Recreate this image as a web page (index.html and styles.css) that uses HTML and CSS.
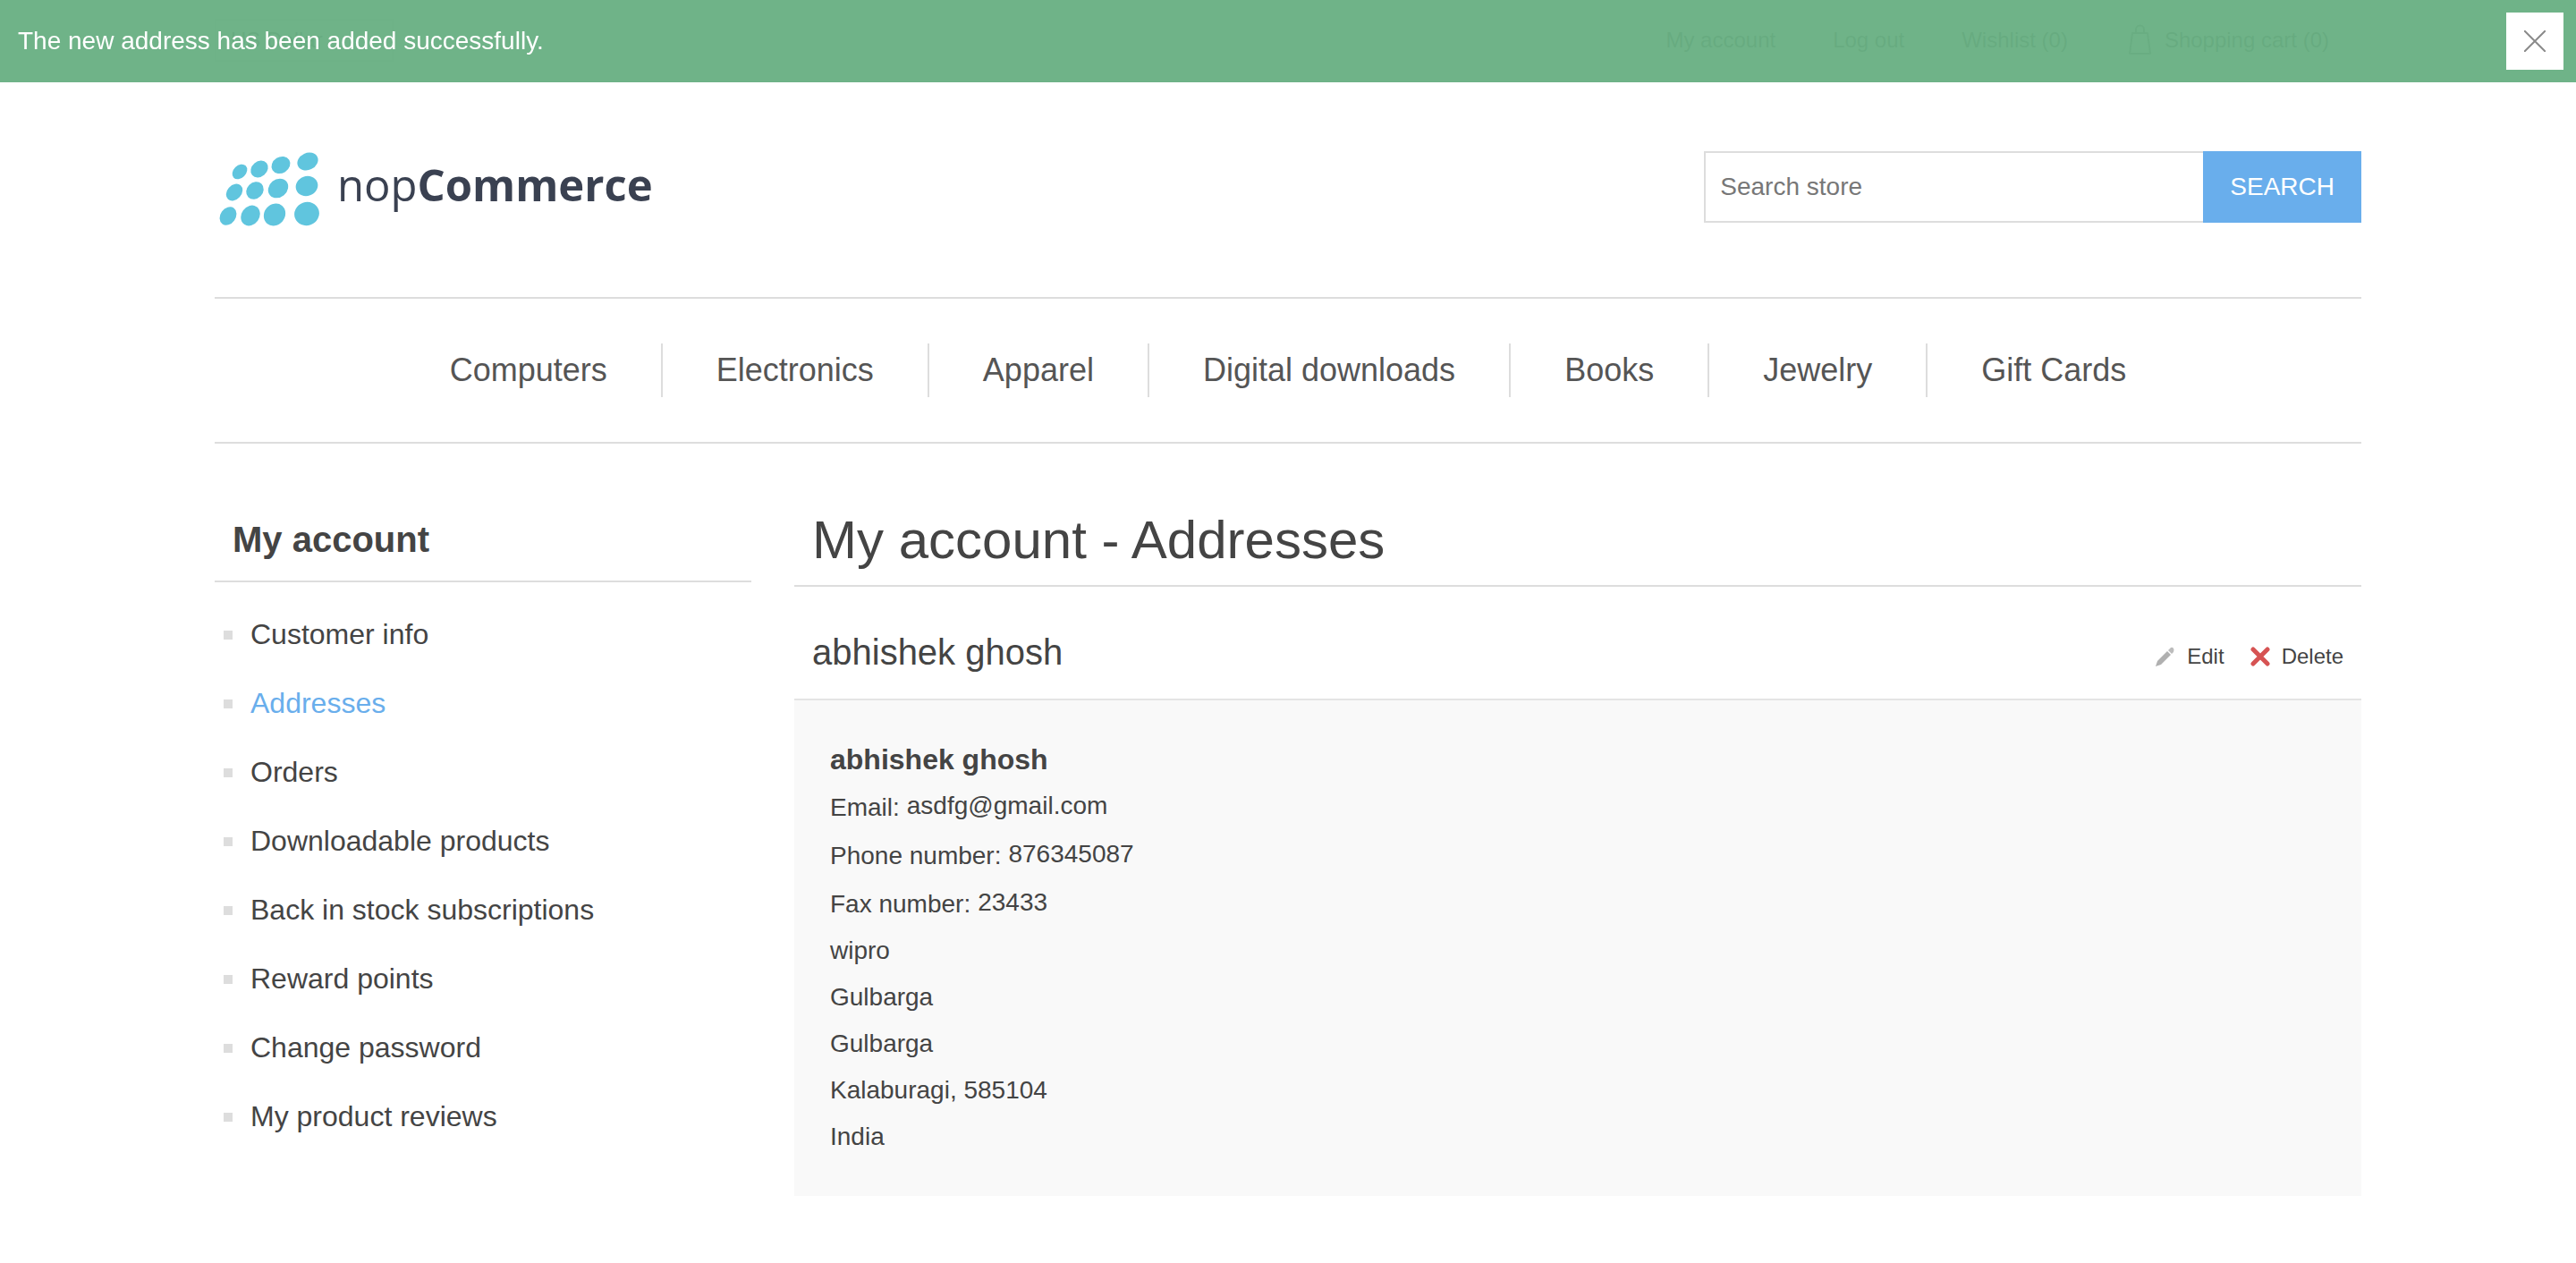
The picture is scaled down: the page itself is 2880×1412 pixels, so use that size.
FILE: index.html
```html
<!DOCTYPE html>
<html lang="en">
<head>
<meta charset="utf-8">
<meta name="viewport" content="width=device-width, initial-scale=1">
<title>My account - Addresses</title>
<link rel="stylesheet" href="styles.css">
</head>
<body>
<div class="notification" role="status">
  <p class="notification-text">The new address has been added successfully.</p>
  <button class="notification-close" type="button" aria-label="Close">
    <svg width="24" height="24" viewBox="0 0 24 24" aria-hidden="true"><path d="M0 0L24 24M24 0L0 24" fill="none" stroke="#8a8a8a" stroke-width="2"/></svg>
  </button>
</div>

<div class="wrapper">
  <header>
    <div class="header-upper">
      <select class="currency" aria-label="Currency"><option>US Dollar</option></select>
      <nav class="header-links" aria-label="Account">
        <a href="#">My account</a>
        <a href="#">Log out</a>
        <a href="#">Wishlist (0)</a>
        <a href="#" class="cart-link">
          <svg width="32" height="36" viewBox="0 0 32 36" aria-hidden="true"><path d="M8 10H25L28 33H5ZM12 10V6a4 4 0 0 1 9 0v4" fill="none" stroke="#888" stroke-width="2" stroke-linejoin="round"/></svg>
          Shopping cart (0)
        </a>
      </nav>
    </div>
    <div class="header-lower">
      <a class="logo" href="#" aria-label="nopCommerce">
        <svg width="500" height="100" viewBox="0 0 500 100" aria-hidden="true">
          <g fill="#60c5de">
            <ellipse cx="28" cy="33" rx="9.5" ry="7" transform="rotate(-45 28 33)"/>
            <ellipse cx="50" cy="30" rx="10.5" ry="8.5" transform="rotate(-40 50 30)"/>
            <ellipse cx="74" cy="25.500" rx="11" ry="9" transform="rotate(-32 74 25.500)"/>
            <ellipse cx="104" cy="21.500" rx="12" ry="9.500" transform="rotate(-25 104 21.500)"/>
            <ellipse cx="22" cy="56" rx="10.500" ry="8" transform="rotate(-48 22 56)"/>
            <ellipse cx="45" cy="54" rx="10.500" ry="9" transform="rotate(-45 45 54)"/>
            <ellipse cx="71" cy="51.500" rx="12" ry="10" transform="rotate(-40 71 51.500)"/>
            <ellipse cx="103" cy="49" rx="12.500" ry="11" transform="rotate(-20 103 49)"/>
            <ellipse cx="15" cy="82.500" rx="11" ry="8.500" transform="rotate(-55 15 82.500)"/>
            <ellipse cx="40" cy="82" rx="12" ry="10" transform="rotate(-55 40 82)"/>
            <ellipse cx="67" cy="81" rx="13" ry="11.500" transform="rotate(-50 67 81)"/>
            <ellipse cx="103" cy="80" rx="14" ry="13" transform="rotate(-20 103 80)"/>
          </g>
          <text x="137" y="66" class="logo-text">nop<tspan class="logo-bold">Commerce</tspan></text>
        </svg>
      </a>
      <form class="search">
        <input class="search-input" type="text" placeholder="Search store" aria-label="Search store">
        <button class="search-button" type="button">SEARCH</button>
      </form>
    </div>
  </header>

  <nav class="menu" aria-label="Categories">
    <a href="#">Computers</a>
    <a href="#">Electronics</a>
    <a href="#">Apparel</a>
    <a href="#">Digital downloads</a>
    <a href="#">Books</a>
    <a href="#">Jewelry</a>
    <a href="#">Gift Cards</a>
  </nav>

  <div class="columns">
    <aside class="side">
      <h2 class="side-title">My account</h2>
      <ul class="side-list">
        <li><a href="#">Customer info</a></li>
        <li><a href="#" class="active" aria-current="page">Addresses</a></li>
        <li><a href="#">Orders</a></li>
        <li><a href="#">Downloadable products</a></li>
        <li><a href="#">Back in stock subscriptions</a></li>
        <li><a href="#">Reward points</a></li>
        <li><a href="#">Change password</a></li>
        <li><a href="#">My product reviews</a></li>
      </ul>
    </aside>

    <main class="main">
      <h1 class="page-title">My account - Addresses</h1>
      <section>
        <div class="address-head">
          <h2 class="address-title">abhishek ghosh</h2>
          <div class="actions">
            <button type="button" class="action">
              <svg width="24" height="24" viewBox="0 0 24 24" aria-hidden="true"><path d="M2 23L4 17L15 6L19 10L8 21Z" fill="#b0b0b0"/><path d="M16 5L19 2Q21 1 22 3Q23 4 22 7L20 9Z" fill="#bcbcbc"/></svg>
              Edit
            </button>
            <button type="button" class="action">
              <svg width="24" height="24" viewBox="0 0 24 24" aria-hidden="true"><path d="M5 4L21 20M21 4L5 20" fill="none" stroke="#d65353" stroke-width="5" stroke-linecap="round"/></svg>
              Delete
            </button>
          </div>
        </div>
        <ul class="address">
          <li class="name">abhishek ghosh</li>
          <li class="field"><span class="label">Email:</span> <span>asdfg@gmail.com</span></li>
          <li class="field"><span class="label">Phone number:</span> <span>876345087</span></li>
          <li class="field"><span class="label">Fax number:</span> <span>23433</span></li>
          <li>wipro</li>
          <li>Gulbarga</li>
          <li>Gulbarga</li>
          <li>Kalaburagi, 585104</li>
          <li>India</li>
        </ul>
      </section>
    </main>
  </div>
</div>
</body>
</html>
```
FILE: styles.css
```css
* { box-sizing: border-box; margin: 0; padding: 0; }

body {
  background: #fff;
  color: #444;
  font: 28px/32px "Liberation Sans", Arial, sans-serif;
}

a { color: inherit; text-decoration: none; }
ul { list-style: none; }
button, input, select { font: inherit; color: inherit; border: 0; border-radius: 0; }
button { background: none; cursor: pointer; }
svg { display: block; flex: none; }

/* Message bar over the top of the page */
.notification {
  position: fixed;
  top: 0;
  left: 0;
  right: 0;
  z-index: 10;
  display: flex;
  align-items: center;
  justify-content: space-between;
  padding: 14px 14px 14px 20px;
  background: rgba(103, 175, 130, 0.95);
  color: #fff;
}
.notification-close {
  display: flex;
  align-items: center;
  justify-content: center;
  width: 64px;
  height: 64px;
  background: #fff;
}

.wrapper { width: 84%; max-width: 2400px; margin: 0 auto; }

/* Header */
.header-upper {
  display: flex;
  align-items: center;
  justify-content: space-between;
  height: 92px;
  padding-right: 36px;
  border-bottom: 2px solid #ddd;
  color: #666;
  font-size: 24px;
}
.currency {
  width: 200px;
  height: 48px;
  padding: 0 16px;
  border: 2px solid #ddd;
  background: #fff;
  appearance: none;
}
.header-links { display: flex; align-items: center; gap: 64px; }
.cart-link { display: flex; align-items: center; gap: 12px; }
.header-lower {
  display: flex;
  align-items: center;
  justify-content: space-between;
  height: 240px;
  padding-bottom: 6px;
}
.logo-text { font: 400 49px "Open Sans", "Noto Sans", sans-serif; fill: #3a4151; }
.logo-bold { font-weight: 700; }

.search { display: flex; height: 80px; }
.search-input {
  width: 558px;
  padding: 0 16px;
  border: 2px solid #ddd;
  border-right: 0;
  background: #fff;
}
.search-input::placeholder { color: #777; opacity: 1; }
.search-button { padding: 0 30px; background: #69aeec; color: #fff; }

/* Category menu */
.menu {
  display: flex;
  justify-content: center;
  padding: 50px 0;
  border-top: 2px solid #ddd;
  border-bottom: 2px solid #ddd;
  color: #555;
  font-size: 36px;
  line-height: 60px;
}
.menu a { padding: 0 60px; }
.menu a + a { border-left: 2px solid #ddd; }

/* Page columns */
.columns {
  display: grid;
  grid-template-columns: 25% 73%;
  justify-content: space-between;
  align-items: start;
  padding: 60px 0;
}
.side-title {
  padding: 24px 20px 23px;
  border-bottom: 2px solid #ddd;
  font-size: 40px;
  line-height: 46px;
}
.side-list { padding: 20px 10px; font-size: 32px; line-height: 37px; }
.side-list li { display: flex; align-items: center; gap: 20px; padding: 20px 0; }
.side-list li::before { content: ""; width: 10px; height: 10px; background: #ddd; }
.active { color: #69aeec; }

.page-title {
  padding: 13px 20px 16px;
  border-bottom: 2px solid #ddd;
  font-size: 60px;
  font-weight: 400;
  line-height: 69px;
}
.address-head {
  display: flex;
  align-items: flex-end;
  justify-content: space-between;
  padding: 50px 20px 29px;
  border-bottom: 2px solid #e4e4e4;
}
.address-title { font-size: 40px; font-weight: 400; line-height: 46px; }
.actions { display: flex; gap: 27px; padding-bottom: 4px; }
.action { display: flex; align-items: center; gap: 13px; font-size: 24px; line-height: 28px; }

.address {
  display: grid;
  gap: 20px;
  padding: 50px 40px;
  background: #f9f9f9;
}
.name { font-size: 32px; font-weight: 700; }
.field { display: flex; gap: 8px; }
.label { padding-top: 2px; }
```
